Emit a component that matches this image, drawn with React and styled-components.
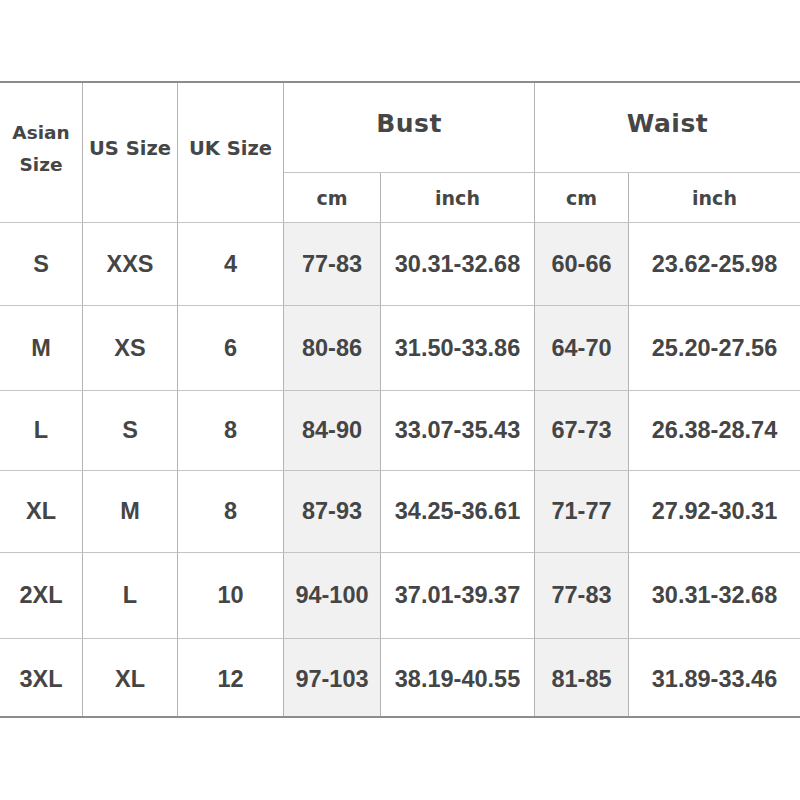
import React from 'react';
import styled, { createGlobalStyle } from 'styled-components';

const Global = createGlobalStyle`
  body {
    margin: 0;
    background: #fff;
  }
`;

const Page = styled.div`
  width: 800px;
  height: 800px;
  padding-top: 82px;
  box-sizing: border-box;
  background: #fff;
`;

const Grid = styled.div`
  display: grid;
  grid-template-columns: 83px 95px 106px 97px 154px 94px 171px;
  grid-template-rows: 90px 50px 83px 85px 80px 82px 86px 77px;
  border-top: 2px solid #8c8c8c;
  border-bottom: 2px solid #8c8c8c;
  box-sizing: border-box;
  margin-top: -1px;
`;

const Cell = styled.div`
  display: flex;
  align-items: center;
  justify-content: center;
  text-align: center;
  box-sizing: border-box;
  border-right: ${(p) => (p.$last ? 'none' : '1px solid #b4b4b4')};
  border-bottom: ${(p) => (p.$bottom ? 'none' : '1px solid #c4c4c4')};
  background: ${(p) => (p.$shade ? '#f1f1f1' : '#fff')};
  grid-row: ${(p) => p.$row || 'auto'};
  grid-column: ${(p) => p.$col || 'auto'};
  color: #464646;
`;

const HeadText = styled.span`
  font-family: "Comic Sans MS", "DejaVu Sans", sans-serif;
  font-weight: bold;
  font-size: ${(p) => p.$size || 19}px;
  line-height: 32px;
  letter-spacing: ${(p) => (p.$big ? '0.5px' : '0')};
  margin-top: ${(p) => p.$shift || 0}px;
`;

const DataText = styled.span`
  font-family: "Liberation Sans", Arial, sans-serif;
  font-weight: bold;
  font-size: 23.5px;
  color: #454545;
  margin-top: ${(p) => p.$shift || 0}px;
`;

const rows = [
  ['S', 'XXS', '4', '77-83', '30.31-32.68', '60-66', '23.62-25.98'],
  ['M', 'XS', '6', '80-86', '31.50-33.86', '64-70', '25.20-27.56'],
  ['L', 'S', '8', '84-90', '33.07-35.43', '67-73', '26.38-28.74'],
  ['XL', 'M', '8', '87-93', '34.25-36.61', '71-77', '27.92-30.31'],
  ['2XL', 'L', '10', '94-100', '37.01-39.37', '77-83', '30.31-32.68'],
  ['3XL', 'XL', '12', '97-103', '38.19-40.55', '81-85', '31.89-33.46'],
];

export default function App() {
  return (
    <Page>
      <Global />
      <Grid>
        <Cell $row="1 / span 2" $col="1">
          <HeadText $size={18.5} $shift={-8}>Asian<br />Size</HeadText>
        </Cell>
        <Cell $row="1 / span 2" $col="2">
          <HeadText $size={19.5} $shift={-8}>US Size</HeadText>
        </Cell>
        <Cell $row="1 / span 2" $col="3">
          <HeadText $size={19.5} $shift={-8}>UK Size</HeadText>
        </Cell>
        <Cell $row="1" $col="4 / span 2">
          <HeadText $size={25} $big $shift={-8}>Bust</HeadText>
        </Cell>
        <Cell $row="1" $col="6 / span 2" $last>
          <HeadText $size={25} $big $shift={-8}>Waist</HeadText>
        </Cell>
        <Cell $row="2" $col="4"><HeadText>cm</HeadText></Cell>
        <Cell $row="2" $col="5"><HeadText>inch</HeadText></Cell>
        <Cell $row="2" $col="6"><HeadText>cm</HeadText></Cell>
        <Cell $row="2" $col="7" $last><HeadText>inch</HeadText></Cell>
        {rows.map((r, i) =>
          r.map((v, j) => (
            <Cell
              key={`${i}-${j}`}
              $shade={j === 3 || j === 5}
              $last={j === 6}
              $bottom={i === rows.length - 1}
            >
              <DataText $shift={i === rows.length - 1 ? 4 : 0}>{v}</DataText>
            </Cell>
          ))
        )}
      </Grid>
    </Page>
  );
}
